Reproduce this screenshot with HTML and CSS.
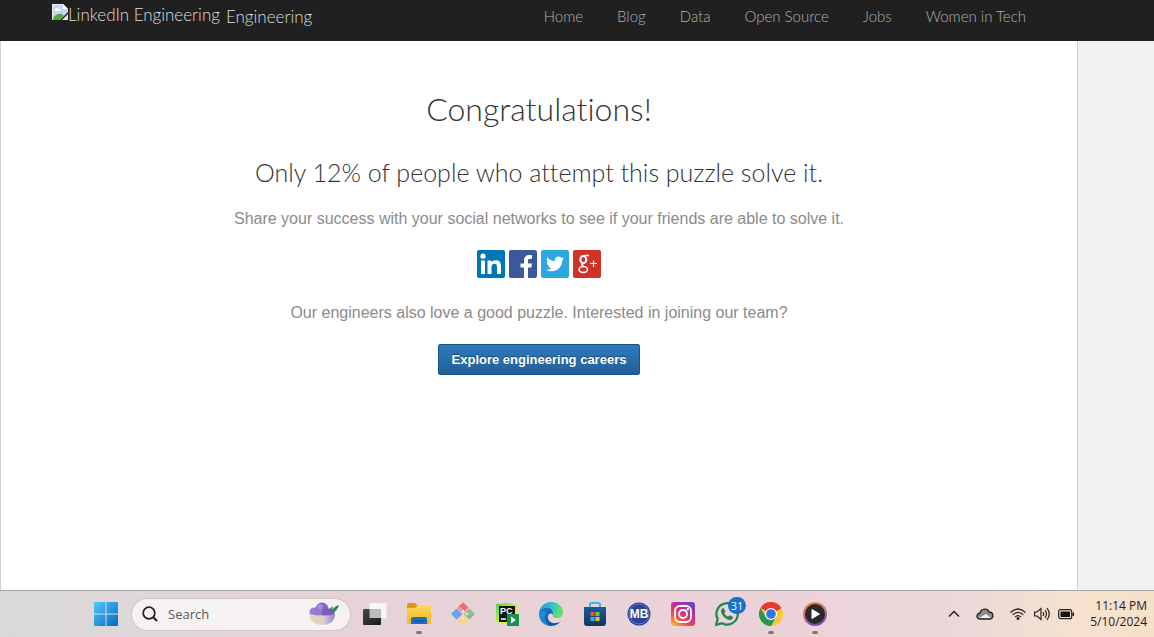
FILE: index.html
```html
<!DOCTYPE html>
<html lang="en">
<head>
<meta charset="utf-8">
<meta name="viewport" content="width=device-width, initial-scale=1">
<title>LinkedIn Engineering</title>
<link rel="stylesheet" href="styles.css">
</head>
<body>
<header class="site-header">
  <a class="brand" href="#">
    <span class="brand-logo">
      <svg class="broken-image" width="16" height="16" viewBox="0 0 16 16" aria-hidden="true">
        <path d="M0 0h11l5 5v3L8 16H0z" fill="#c4d7f4"/>
        <path d="M.5 16V.5H11" fill="none" stroke="#e9ecef"/>
        <path d="M3 6c0-2 2-3 3-1 2-1 3 2 1 2H3z" fill="#fff"/>
        <path d="M1 15c1-4 5-6 9-5l2 2-4 4H1z" fill="#55a838"/>
        <path d="M11 0v5h5z" fill="#fff"/>
        <path d="M16 10v6h-6z" fill="#e4e6e8"/>
      </svg><span>LinkedIn Engineering</span>
    </span>
    <span class="brand-name">Engineering</span>
  </a>
  <nav class="site-nav" aria-label="Main">
    <a href="#">Home</a>
    <a href="#">Blog</a>
    <a href="#">Data</a>
    <a href="#">Open Source</a>
    <a href="#">Jobs</a>
    <a href="#">Women in Tech</a>
  </nav>
</header>

<main class="page">
  <h1 class="title">Congratulations!</h1>
  <h2 class="subtitle">Only 12% of people who attempt this puzzle solve it.</h2>
  <p class="text">Share your success with your social networks to see if your friends are able to solve it.</p>
  <div class="share">
    <a href="#" aria-label="Share on LinkedIn">
      <svg width="28" height="28" viewBox="0 0 28 28"><rect width="28" height="28" rx="2" fill="#0077b5"/><g fill="#fff"><circle cx="6" cy="6.200" r="2.600"/><path d="M4 10.500h4V24H4zM10.500 10.500h3.900v1.900c.8-1.400 2.300-2.200 4.200-2.200 4.200 0 5.400 2.600 5.400 6.600V24h-4v-6.600c0-2-.4-3.700-2.500-3.700-2.300 0-3 1.600-3 3.700V24h-4z"/></g></svg>
    </a>
    <a href="#" aria-label="Share on Facebook">
      <svg width="28" height="28" viewBox="0 0 28 28"><rect width="28" height="28" rx="2" fill="#3b5998"/><path d="M15 28V17.500h-3.500v-4H15v-3C15 7 17.200 5 20.400 5c1.200 0 2.300.1 2.600.2v3.600h-2c-1.600 0-2 .9-2 2v2.700h4l-.6 4H19V28z" fill="#fff"/></svg>
    </a>
    <a href="#" aria-label="Share on Twitter">
      <svg width="28" height="28" viewBox="0 0 28 28"><rect width="28" height="28" rx="2" fill="#2ca7e0"/><path transform="translate(5 5) scale(.75)" d="M23.950 4.570a10 10 0 0 1-2.820.77 4.960 4.960 0 0 0 2.160-2.720c-.95.550-2 .950-3.130 1.180a4.920 4.920 0 0 0-8.380 4.480C7.690 8.090 4.070 6.130 1.640 3.160a4.820 4.820 0 0 0-.670 2.480c0 1.710.870 3.210 2.190 4.100a4.900 4.900 0 0 1-2.230-.620v.060a4.920 4.920 0 0 0 3.950 4.830 5 5 0 0 1-2.210.080 4.940 4.940 0 0 0 4.600 3.420A9.870 9.870 0 0 1 0 19.540a14 14 0 0 0 7.550 2.210c9.050 0 14-7.500 14-13.980 0-.210 0-.420-.020-.630a9.940 9.940 0 0 0 2.420-2.570z" fill="#fff"/></svg>
    </a>
    <a href="#" aria-label="Share on Google Plus">
      <svg width="28" height="28" viewBox="0 0 28 28"><rect width="28" height="28" rx="2" fill="#d0322a"/><g fill="none" stroke="#fff"><ellipse cx="10.300" cy="9.600" rx="3" ry="3.600" stroke-width="2"/><path d="M11 5.500h5" stroke-width="1.500"/><path d="M10 13.500c-2.200 1.600-.7 2.500 1 3.300" stroke-width="1.800"/><ellipse cx="10.300" cy="19.500" rx="4.200" ry="3" stroke-width="1.600"/><path d="M20.500 10.500v6.500M17 13.500h7" stroke-width="1.200"/></g></svg>
    </a>
  </div>
  <p class="text">Our engineers also love a good puzzle. Interested in joining our team?</p>
  <button class="cta" type="button">Explore engineering careers</button>
</main>

<footer class="taskbar">
  <button class="start" type="button" aria-label="Start">
    <svg width="24" height="24" viewBox="0 0 24 24"><defs><linearGradient id="win" x2="1" y2="1" gradientUnits="userSpaceOnUse" x1="0" y1="0" gradientTransform="scale(24)"><stop stop-color="#4fc8fb"/><stop offset="1" stop-color="#0568c8"/></linearGradient></defs><path fill="url(#win)" d="M1 0h10.500v11.500H0V1q0-1 1-1zM12.500 0H23q1 0 1 1v10.500H12.500zM0 12.500h11.500V24H1q-1 0-1-1zM12.500 12.500H24V23q0 1-1 1H12.500z"/></svg>
  </button>
  <label class="search">
    <svg width="16" height="16" viewBox="0 0 16 16" fill="none" stroke="#262327" stroke-width="1.800" aria-hidden="true"><circle cx="7" cy="7" r="5.800"/><path d="M11 11l4 4" stroke-width="2.200"/></svg>
    <input type="text" placeholder="Search" aria-label="Search">
    <svg width="32" height="24" viewBox="0 0 32 24" aria-hidden="true"><defs><linearGradient id="bowl"><stop stop-color="#e9d9b5"/><stop offset=".55" stop-color="#ddd0c8"/><stop offset="1" stop-color="#8b84d8"/></linearGradient></defs><path d="M20 12c1-5 3-7 5-8l-1 4c2-3 4-4 7-5-1 4-4 8-8 9z" fill="#36a04b"/><path d="M22 12l8-8" stroke="#1b7135"/><circle cx="6" cy="10" r="4.500" fill="#9c80d9"/><circle cx="22" cy="11" r="4.500" fill="#7658bd"/><circle cx="14" cy="7" r="6.500" fill="#8664c7"/><circle cx="12" cy="5" r="3" fill="#a589df"/><circle cx="10" cy="11" r="4" fill="#9878d5"/><circle cx="18" cy="11" r="4" fill="#7d5bc0"/><path d="M1 12q13 3 26 0c0 7-5 11-13 11S1 18 1 12z" fill="url(#bowl)"/></svg>
  </label>
  <div class="apps">
    <button type="button" aria-label="Task view"><svg width="24" height="24" viewBox="0 0 24 24"><defs><linearGradient id="tv" x2="1" y2="1"><stop stop-color="#484848"/><stop offset="1" stop-color="#191919"/></linearGradient></defs><rect x="6.500" y="1" width="17" height="15" rx="1" fill="#f6f6f6"/><rect x="0" y="7" width="18" height="16" rx="1" fill="url(#tv)"/><path d="M6.500 7H18v9H6.500z" fill="#bcbcbc"/></svg></button>
    <button class="running" type="button" aria-label="File Explorer"><svg width="24" height="24" viewBox="0 0 24 24"><defs><linearGradient id="fe" x2="0" y2="1"><stop stop-color="#ffd85a"/><stop offset="1" stop-color="#f8b51e"/></linearGradient></defs><path d="M0 3q0-2 2-2h6l3 3-2 4H0z" fill="#d99a10"/><path d="M0 6h8l3-3h11q2 0 2 2v15q0 2-2 2H2q-2 0-2-2z" fill="url(#fe)"/><path d="M4 22v-5q0-2 2-2h12q2 0 2 2v5z" fill="#1a6fc1"/><path d="M7 19h10" stroke="#12579e" stroke-width="1.500"/></svg></button>
    <button type="button" aria-label="Git"><svg width="24" height="24" viewBox="0 0 24 24"><g transform="rotate(45 12 12)"><rect x="3.500" y="3.500" width="8" height="8" rx="1" fill="#f0706f"/><rect x="12.500" y="3.500" width="8" height="8" rx="1" fill="#8ac088"/><rect x="3.500" y="12.500" width="8" height="8" rx="1" fill="#6e9ff0"/><rect x="12.500" y="12.500" width="8" height="8" rx="1" fill="#f9d680"/></g><path d="M8 5l4 4v7M12 9l4 3" fill="none" stroke="#ead5d9"/><circle cx="12" cy="9" r="1.200" fill="#f3e6e8"/><circle cx="12" cy="16" r="1.200" fill="#f3e6e8"/><circle cx="16" cy="12" r="1.200" fill="#f3e6e8"/><path d="M9 4l6-1-2 5zM1 12l7-5 3 6zM17 8l5 4-5 3z" fill="none"/></svg></button>
    <button type="button" aria-label="PyCharm"><svg width="24" height="24" viewBox="0 0 24 24"><defs><linearGradient id="pc" x2="1" y2="1"><stop stop-color="#41d365"/><stop offset=".5" stop-color="#c7ee2b"/><stop offset="1" stop-color="#fcf84a"/></linearGradient></defs><path d="M1 2l12-1 9 2-1 18-14 1-6-3z" fill="url(#pc)"/><path d="M4 4h16v16H4z" fill="#10150f"/><text class="icon-text" x="5" y="12" font-size="9">PC</text><path d="M6 17h5" stroke="#fff" stroke-width="1.500"/><path d="M12 12h12v12H12z" fill="#149247"/><path d="M16 14.500v7l5-3.500z" fill="#fff"/></svg></button>
    <button type="button" aria-label="Edge"><svg width="24" height="24" viewBox="0 0 24 24"><defs><linearGradient id="eg" x2="1" y2=".3"><stop stop-color="#2295dd"/><stop offset=".6" stop-color="#30c5c4"/><stop offset="1" stop-color="#65df64"/></linearGradient><linearGradient id="eb" x2=".6" y2="1"><stop stop-color="#1a79ca"/><stop offset="1" stop-color="#1552a1"/></linearGradient></defs><path d="M0 11C1 4 6 0 12 0c7 0 12 5 12 10 0 4-3 6-6 6-3 0-5-1-4-3 2-3-1-6-4-6-5 0-9 3-10 6z" fill="url(#eg)"/><path d="M0 11c2-4 6-6 10-5 3 1 5 4 4 7-1-2-4-2-5 1-1 4 3 8 8 7 2 0 4-1 5-2-3 4-7 5-11 5C4 23 0 18 0 11z" fill="url(#eb)"/><path d="M8 10c-5 5-1 12 4 14-7 0-12-5-12-12 1-3 4-4 8-2z" fill="#269bdc" opacity=".65"/></svg></button>
    <button type="button" aria-label="Microsoft Store"><svg width="24" height="24" viewBox="0 0 24 24"><defs><linearGradient id="ms" x2="0" y2="1"><stop stop-color="#185ca0"/><stop offset="1" stop-color="#143758"/></linearGradient></defs><path d="M7 6V2.500Q7 1 8.500 1h7Q17 1 17 2.500V6" fill="none" stroke="#39b8ec" stroke-width="2"/><path d="M1 5h22v16q0 3-3 3H4q-3 0-3-3z" fill="url(#ms)"/><path d="M7.500 10h4v4h-4z" fill="#ef5325"/><path d="M12.500 10h4v4h-4z" fill="#80bc3c"/><path d="M7.500 15h4v4h-4z" fill="#3ba9ec"/><path d="M12.500 15h4v4h-4z" fill="#fbbb20"/></svg></button>
    <button type="button" aria-label="MB"><svg width="24" height="24" viewBox="0 0 24 24"><circle cx="12" cy="12" r="11.500" fill="#2c4098"/><circle cx="12" cy="12" r="10" fill="none" stroke="#6879bd"/><text class="icon-text" x="12" y="16" font-size="12" text-anchor="middle">MB</text></svg></button>
    <button type="button" aria-label="Instagram"><svg width="24" height="24" viewBox="0 0 24 24"><defs><linearGradient id="ig" x1=".1" y1="1" x2=".8" y2="0"><stop stop-color="#fdbd3f"/><stop offset=".3" stop-color="#f4503f"/><stop offset=".6" stop-color="#cf2c92"/><stop offset="1" stop-color="#6743c8"/></linearGradient></defs><rect width="24" height="24" rx="3" fill="url(#ig)"/><g fill="none" stroke="#fff" stroke-width="1.800"><rect x="4" y="4" width="16" height="16" rx="5"/><circle cx="12" cy="12" r="4"/></g><circle cx="16.800" cy="7.200" r="1.200" fill="#fff"/></svg></button>
    <button type="button" aria-label="WhatsApp, 31 unread"><svg width="24" height="24" viewBox="0 0 24 24"><path d="M1 23l1.700-6A10.700 10.700 0 1 1 7 21.300z" fill="none" stroke="#218551" stroke-width="2.200"/><path d="M8.500 6l2 3.500-1.200 1.700c1 1.800 2 2.600 3.700 3.500l1.700-1.500 3.300 1.800c0 2-1.500 3-3.200 3C10.500 17.500 6.500 13 6 9.500 6 8 7 6 8.500 6z" fill="#218551"/></svg><span class="badge">31</span></button>
    <button class="running" type="button" aria-label="Chrome"><svg width="24" height="24" viewBox="0 0 24 24"><circle cx="12" cy="12" r="12" fill="#fcc934"/><path d="M12 12L1.600 6A12 12 0 0 1 22.400 6z" fill="#e23c30"/><path d="M12 6h10.400L12 12z" fill="#e23c30"/><path d="M1.600 6A12 12 0 0 0 12 24l5.200-9L12 12 6.800 15z" fill="#23984e"/><circle cx="12" cy="12" r="6" fill="#fff"/><circle cx="12" cy="12" r="4.800" fill="#2d76e6"/></svg></button>
    <button class="running" type="button" aria-label="Media Player"><svg width="24" height="24" viewBox="0 0 24 24"><defs><linearGradient id="mp" x2=".3" y2="1"><stop stop-color="#f28b35"/><stop offset=".5" stop-color="#d1706d"/><stop offset="1" stop-color="#7551b9"/></linearGradient></defs><circle cx="12" cy="12" r="12" fill="url(#mp)"/><circle cx="12" cy="12" r="10" fill="#2a292b"/><path d="M9 7.500v9l7.500-4.500z" fill="#fff" stroke="#fff" stroke-linejoin="round"/></svg></button>
  </div>
  <div class="tray">
    <button type="button" aria-label="Show hidden icons"><svg width="12" height="16" viewBox="0 0 12 16" fill="none" stroke="#252222" stroke-width="1.500"><path d="M1 10.500l5-5 5 5"/></svg></button>
    <button type="button" aria-label="OneDrive"><svg width="18" height="16" viewBox="0 0 18 16"><path d="M4 13c-4 0-4-5 0-6 1-5 8-5 9-1 5 0 5 7 1 7z" fill="#8c8c8e"/><path d="M3 12l7-4 5 4q-1 .5-2 .5H4z" fill="#efeeee"/><path d="M4 13c-4 0-4-5 0-6 1-5 8-5 9-1 5 0 5 7 1 7z" fill="none" stroke="#242426" stroke-width="1.300"/></svg></button>
    <button class="system" type="button" aria-label="Network, volume and battery">
      <svg width="16" height="16" viewBox="0 0 16 16" fill="none" stroke="#252222" stroke-width="1.200"><path d="M0.500 6.500q7.500-7 15 0M2.700 8.800q5.300-5 10.600 0M5 11q3-2.800 6 0"/><circle cx="8" cy="12.500" r="1" fill="#252222"/></svg>
      <svg width="16" height="16" viewBox="0 0 16 16" fill="none" stroke="#252222" stroke-width="1.200"><path d="M.6 6h2.400l4-3.500v11L3 10H.6zM9 6q1.400 2 0 4M11 4q3 4 0 8M13 2.200q4.500 5.800 0 11.600"/></svg>
      <svg width="16" height="16" viewBox="0 0 16 16"><rect x=".7" y="3.700" width="13" height="9" rx="2" fill="none" stroke="#252222" stroke-width="1.200"/><path d="M2.500 5.500H12v5.400H2.500zM14.500 6.500H16v3.500h-1.500z" fill="#111"/></svg>
    </button>
    <div class="clock"><time>11:14 PM</time><time>5/10/2024</time></div>
  </div>
</footer>
</body>
</html>
```

FILE: styles.css
```css
* {
  box-sizing: border-box;
}

body {
  margin: 0;
  min-height: 100vh;
  display: flex;
  flex-direction: column;
  background: #f1f1f1;
  font-family: "Liberation Sans", Arial, sans-serif;
  font-variant-ligatures: none;
}

a {
  color: inherit;
  text-decoration: none;
}

button {
  padding: 0;
  border: 0;
  background: none;
  font: inherit;
  color: inherit;
}

svg {
  display: block;
}

.site-header {
  display: flex;
  justify-content: space-between;
  align-items: flex-start;
  padding: 4px 128px 13px 52px;
  background: #202020;
  color: #dedede;
  font-family: Lato, sans-serif;
  font-weight: 300;
}

.brand {
  display: flex;
  gap: 6px;
  font-size: 17px;
  line-height: 22px;
}

.brand-logo {
  display: flex;
}

.brand-name {
  padding-top: 2px;
}

.site-nav {
  display: flex;
  gap: 34px;
  color: #b0b0b0;
  font-size: 15px;
  line-height: 24px;
}

.page {
  flex: 1;
  display: flex;
  flex-direction: column;
  align-items: center;
  margin-right: 76px;
  padding: 48px 16px;
  border: solid #d0d0d0;
  border-width: 0 1px;
  background: #fff;
  text-align: center;
}

.title,
.subtitle {
  margin: 0;
  color: #333;
  font-family: Lato, sans-serif;
  font-weight: 300;
}

.title {
  font-size: 32px;
  line-height: 40px;
}

.subtitle {
  margin-top: 27px;
  font-size: 25px;
  line-height: 32px;
}

.text {
  margin: 19px 0;
  color: #8b8b8b;
  font-size: 16px;
  line-height: 24px;
}

.share {
  display: flex;
  gap: 4px;
  margin-bottom: 4px;
}

.cta {
  padding: 0 13px;
  border: 1px solid #1b5480;
  border-radius: 2px;
  background: linear-gradient(#2d7cbc, #215f99);
  color: #fff;
  font-size: 13px;
  font-weight: 700;
  line-height: 29px;
  text-shadow: 0 -1px 1px #174a75;
}

.taskbar {
  display: flex;
  align-items: center;
  height: 47px;
  padding: 0 7px 0 94px;
  border-top: 1px solid #aaa4a6;
  background: linear-gradient(90deg, #d9d9d9, #dfd8d8 12%, #e6d3d7 30%, #ebd2d9 65%, #ecd6da 82%, #f5e1d0 92%, #f5e1ca);
  font-family: "Open Sans", "Noto Sans", sans-serif;
}

.search {
  display: flex;
  align-items: center;
  gap: 10px;
  width: 218px;
  height: 31px;
  margin: 0 3px 0 14px;
  padding: 0 10px;
  border-radius: 16px;
  background: #f6f2f1;
  box-shadow: 0 0 1px 1px #d2c5c7;
}

.search input {
  flex: 1;
  min-width: 0;
  padding: 0;
  border: 0;
  outline: 0;
  background: none;
  color: #5d5858;
  font: 13px "Open Sans", "Noto Sans", sans-serif;
}

.search input::placeholder {
  color: #5d5858;
}

.apps {
  display: flex;
}

.apps button {
  display: grid;
  place-items: center;
  position: relative;
  width: 44px;
  height: 46px;
}

.running::after {
  content: "";
  position: absolute;
  bottom: 3px;
  width: 6px;
  height: 3px;
  border-radius: 2px;
  background: #837579;
}

.badge {
  position: absolute;
  top: 6px;
  right: 3px;
  width: 18px;
  border-radius: 9px;
  background: #1473cf;
  color: #fff;
  font-size: 11px;
  line-height: 17px;
}

.icon-text {
  fill: #fff;
  font-family: "Liberation Sans", Arial, sans-serif;
  font-weight: 700;
}

.tray {
  display: flex;
  align-items: center;
  gap: 16px;
  margin-left: auto;
  color: #252020;
}

.system {
  display: flex;
  gap: 8px;
}

.clock {
  display: flex;
  flex-direction: column;
  text-align: right;
  font-size: 12px;
  line-height: 16px;
}
```
